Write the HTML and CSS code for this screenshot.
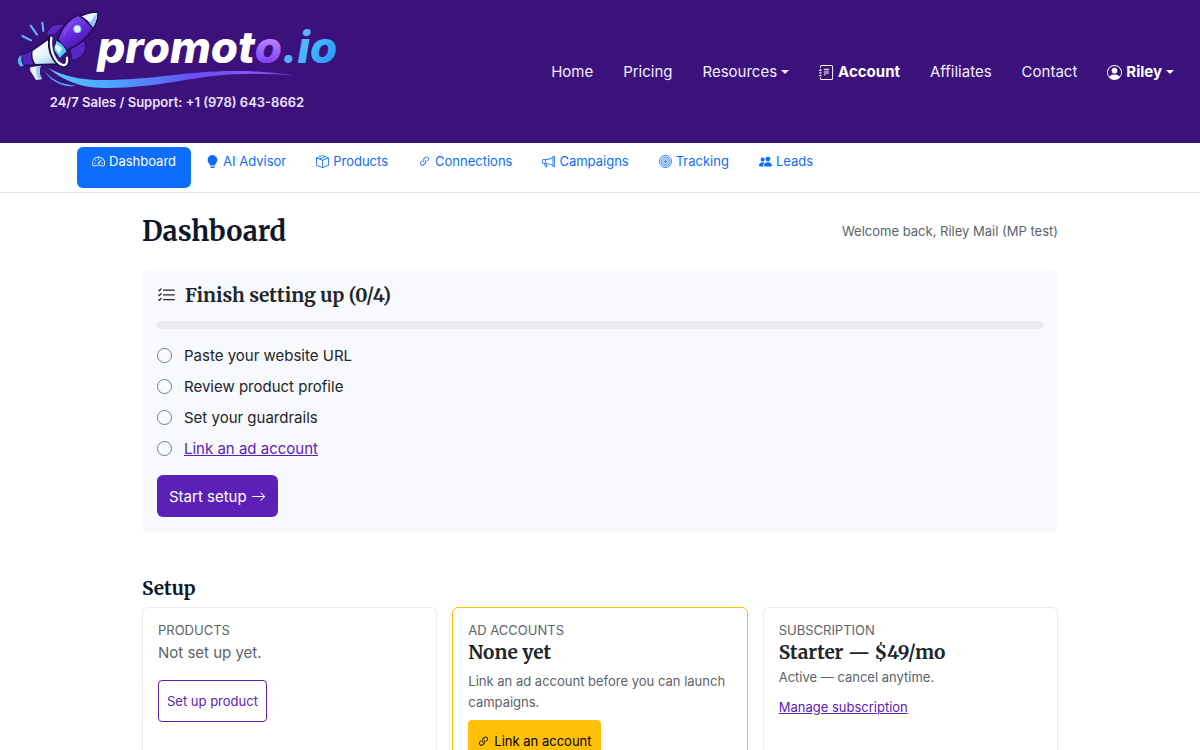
FILE: index.html
```html
<!DOCTYPE html>
<html lang="en">
<head>
    <meta charset="UTF-8">
    <meta name="viewport" content="width=device-width, initial-scale=1.0">
    <title>Dashboard - promoto.io</title>
    <link rel="stylesheet" href="styles.css">
</head>
<body>
    <!-- Shared icons -->
    <svg class="sprite" aria-hidden="true">
        <symbol id="journal" viewBox="0 0 16 16">
            <path d="M5 10.500a.5.5 0 0 1 .5-.5h2a.5.5 0 0 1 0 1h-2a.5.5 0 0 1-.5-.5m0-2a.5.5 0 0 1 .5-.5h5a.5.5 0 0 1 0 1h-5a.5.5 0 0 1-.5-.5m0-2a.5.5 0 0 1 .5-.5h5a.5.5 0 0 1 0 1h-5a.5.5 0 0 1-.5-.5m0-2a.5.5 0 0 1 .5-.5h5a.5.5 0 0 1 0 1h-5a.5.5 0 0 1-.5-.5"/>
            <path d="M3 0h10a2 2 0 0 1 2 2v12a2 2 0 0 1-2 2H3a2 2 0 0 1-2-2v-1h1v1a1 1 0 0 0 1 1h10a1 1 0 0 0 1-1V2a1 1 0 0 0-1-1H3a1 1 0 0 0-1 1v1H1V2a2 2 0 0 1 2-2"/>
            <path d="M1 5v-.5a.5.5 0 0 1 1 0V5h.5a.5.5 0 0 1 0 1h-2a.5.5 0 0 1 0-1zm0 3v-.5a.5.5 0 0 1 1 0V8h.5a.5.5 0 0 1 0 1h-2a.5.5 0 0 1 0-1zm0 3v-.5a.5.5 0 0 1 1 0v.5h.5a.5.5 0 0 1 0 1h-2a.5.5 0 0 1 0-1z"/>
        </symbol>
        <symbol id="person" viewBox="0 0 16 16">
            <path d="M11 6a3 3 0 1 1-6 0 3 3 0 0 1 6 0"/>
            <path fill-rule="evenodd" d="M0 8a8 8 0 1 1 16 0A8 8 0 0 1 0 8m8-7a7 7 0 0 0-5.468 11.37C3.242 11.226 4.805 10 8 10s4.757 1.225 5.468 2.37A7 7 0 0 0 8 1"/>
        </symbol>
        <symbol id="speedometer" viewBox="0 0 16 16">
            <path d="M8 4a.5.5 0 0 1 .5.5V6a.5.5 0 0 1-1 0V4.500A.5.5 0 0 1 8 4M3.732 5.732a.5.5 0 0 1 .707 0l.915.914a.5.5 0 1 1-.708.708l-.914-.915a.5.5 0 0 1 0-.707M2 10a.5.5 0 0 1 .5-.5h1.586a.5.5 0 0 1 0 1H2.500A.5.5 0 0 1 2 10m9.500 0a.5.5 0 0 1 .5-.5h1.500a.5.5 0 0 1 0 1H12a.5.5 0 0 1-.5-.5m.754-4.246a.39.39 0 0 0-.527-.02L7.547 9.310a.91.91 0 1 0 1.302 1.258l3.434-4.297a.39.39 0 0 0-.029-.518z"/>
            <path fill-rule="evenodd" d="M0 10a8 8 0 1 1 15.547 2.661c-.442 1.253-1.845 1.602-2.932 1.250C11.309 13.488 9.475 13 8 13c-1.474 0-3.310.488-4.615.911-1.087.352-2.490.003-2.932-1.250A8 8 0 0 1 0 10m8-7a7 7 0 0 0-6.603 9.329c.203.575.923.876 1.680.63C4.397 12.533 6.358 12 8 12s3.604.532 4.923.96c.757.245 1.477-.056 1.680-.631A7 7 0 0 0 8 3"/>
        </symbol>
        <symbol id="bulb" viewBox="0 0 16 16">
            <path d="M2 6a6 6 0 1 1 10.174 4.310c-.203.196-.359.4-.453.619l-.762 1.769A.5.5 0 0 1 10.500 13h-5a.5.5 0 0 1-.46-.302l-.761-1.770a2 2 0 0 0-.453-.618A5.980 5.980 0 0 1 2 6m3 8.500a.5.5 0 0 1 .5-.5h5a.5.5 0 0 1 0 1l-.224.447a1 1 0 0 1-.894.553H6.618a1 1 0 0 1-.894-.553L5.500 15a.5.5 0 0 1-.5-.5"/>
        </symbol>
        <symbol id="box" viewBox="0 0 16 16">
            <path fill-rule="evenodd" d="M8.186 1.113a.5.5 0 0 0-.372 0L1.846 3.500l2.404.961L10.404 2zm3.564 1.426L5.596 5 8 5.961 14.154 3.500zm3.250 1.700-6.500 2.600v7.922l6.500-2.600V4.240zM7.500 14.762V6.838L1 4.239v7.923zM7.443.184a1.500 1.500 0 0 1 1.114 0l7.129 2.852A.5.5 0 0 1 16 3.500v8.662a1 1 0 0 1-.629.928l-7.185 2.874a.5.5 0 0 1-.372 0L.63 13.090a1 1 0 0 1-.63-.928V3.500a.5.5 0 0 1 .314-.464z"/>
        </symbol>
        <symbol id="link" viewBox="0 0 16 16">
            <path d="M4.715 6.542 3.343 7.914a3 3 0 1 0 4.243 4.243l1.828-1.829A3 3 0 0 0 8.586 5.500L8 6.086a1 1 0 0 0-.154.199 2 2 0 0 1 .861 3.337L6.880 11.450a2 2 0 1 1-2.830-2.830l.793-.792a4 4 0 0 1-.128-1.287z"/>
            <path d="M6.586 4.672A3 3 0 0 0 7.414 9.500l.775-.776a2 2 0 0 1-.896-3.346L9.120 3.550a2 2 0 1 1 2.830 2.830l-.793.792c.112.42.155.855.128 1.287l1.372-1.372a3 3 0 1 0-4.243-4.243z"/>
        </symbol>
        <symbol id="megaphone" viewBox="0 0 16 16">
            <path fill-rule="evenodd" d="M13 2.500a1.500 1.500 0 0 1 3 0v11a1.500 1.500 0 0 1-3 0v-.214c-2.162-1.241-4.490-1.843-6.912-2.083l.405 2.712A1 1 0 0 1 5.510 15.100h-.548a1 1 0 0 1-.916-.599l-1.850-3.490-.202-.003A2.014 2.014 0 0 1 0 9V7a2.020 2.020 0 0 1 1.992-2.013 75 75 0 0 0 2.483-.075c3.043-.154 6.148-.849 8.525-2.199zm1 0v11a.5.5 0 0 0 1 0v-11a.5.5 0 0 0-1 0m-1 1.350c-2.344 1.205-5.209 1.842-8 2.033v4.233q.27.015.537.036c2.568.189 5.093.744 7.463 1.993zm-9 6.215v-4.130a95 95 0 0 1-1.992.052A1.020 1.020 0 0 0 1 7v2c0 .55.448 1.002 1.006 1.009A61 61 0 0 1 4 10.065m-.657.975 1.609 3.037.01.024h.548l-.002-.014-.443-2.966a68 68 0 0 0-1.722-.082z"/>
        </symbol>
        <symbol id="bullseye" viewBox="0 0 16 16">
            <g fill="none" stroke="currentColor">
                <circle cx="8" cy="8" r="7.5"/>
                <circle cx="8" cy="8" r="5.5"/>
                <circle cx="8" cy="8" r="3.5"/>
            </g>
            <circle cx="8" cy="8" r="1.5"/>
        </symbol>
        <symbol id="people" viewBox="0 0 16 16">
            <path d="M7 14s-1 0-1-1 1-4 5-4 5 3 5 4-1 1-1 1zm4-6a3 3 0 1 0 0-6 3 3 0 0 0 0 6m-5.784 6A2.240 2.240 0 0 1 5 13c0-1.355.68-2.750 1.936-3.720A6.300 6.300 0 0 0 5 9c-4 0-5 3-5 4s1 1 1 1zM4.500 8a2.500 2.500 0 1 0 0-5 2.500 2.500 0 0 0 0 5"/>
        </symbol>
        <symbol id="checklist" viewBox="0 0 16 16">
            <g fill="none" stroke="currentColor" stroke-linecap="round" stroke-linejoin="round">
                <path d="M5.500 3.500h9M5.500 7.500h9M5.500 11.500h9"/>
                <path d="m1.500 3.500.5.5 1.500-1.500M1.500 7.500 2 8l1.500-1.500M1.500 11.500l.5.5 1.500-1.500"/>
            </g>
        </symbol>
        <symbol id="circle" viewBox="0 0 16 16">
            <circle cx="8" cy="8" r="7.5" fill="none" stroke="currentColor"/>
        </symbol>
        <symbol id="arrow" viewBox="0 0 16 16">
            <path d="M1 8a.5.5 0 0 1 .5-.5h11.793l-3.147-3.146a.5.5 0 0 1 .708-.708l4 4a.5.5 0 0 1 0 .708l-4 4a.5.5 0 0 1-.708-.708L13.293 8.500H1.500A.5.5 0 0 1 1 8"/>
        </symbol>
    </svg>

    <header class="site-header">
        <div class="brand">
            <a href="#" class="brand-logo" aria-label="promoto.io home">
                <svg class="logo" viewBox="48 30 966 240">
                    <defs>
                        <linearGradient id="violet" x1="0" y1="105" x2="0" y2="195" gradientUnits="userSpaceOnUse">
                            <stop offset="0" stop-color="#c38cff"/>
                            <stop offset="1" stop-color="#7c3df5"/>
                        </linearGradient>
                        <linearGradient id="sky" x1="870" y1="85" x2="990" y2="195" gradientUnits="userSpaceOnUse">
                            <stop offset="0" stop-color="#6fb4ff"/>
                            <stop offset=".55" stop-color="#45b5ff"/>
                            <stop offset="1" stop-color="#2898fb"/>
                        </linearGradient>
                        <linearGradient id="swoosh" x1="130" y1="0" x2="890" y2="0" gradientUnits="userSpaceOnUse">
                            <stop offset="0" stop-color="#5bc8ff"/>
                            <stop offset=".3" stop-color="#4aa0ff"/>
                            <stop offset=".6" stop-color="#6a4cf5"/>
                            <stop offset=".85" stop-color="#8b55ff"/>
                            <stop offset="1" stop-color="#6a35d8"/>
                        </linearGradient>
                        <linearGradient id="hull" x1="200" y1="70" x2="245" y2="140" gradientUnits="userSpaceOnUse">
                            <stop offset="0" stop-color="#8045f2"/>
                            <stop offset=".5" stop-color="#6127d6"/>
                            <stop offset="1" stop-color="#4317a5"/>
                        </linearGradient>
                        <linearGradient id="shell" x1="110" y1="120" x2="150" y2="200" gradientUnits="userSpaceOnUse">
                            <stop offset="0" stop-color="#ffffff"/>
                            <stop offset=".6" stop-color="#e4f2ff"/>
                            <stop offset="1" stop-color="#94c7f0"/>
                        </linearGradient>
                    </defs>
                    <!-- swoosh -->
                    <path fill="url(#swoosh)" d="M144 203C190 228 240 240 310 240c150 0 250-27 390-27 80 0 130 5 187 14-60-5-120-8-187-4-130 7-230 43-390 41-70-1-125-25-166-61z"/>
                    <path fill="#4aaaf5" d="M130 207c20 31 54 47 98 50-34 7-78-10-98-50z"/>
                    <!-- sparks -->
                    <g stroke="#62b5ff" stroke-width="6" stroke-linecap="round">
                        <path d="M67 108l26 13M92 77l19 27M127 68l3 25"/>
                    </g>
                    <!-- rocket fins and hull -->
                    <path fill="#5b25c7" stroke="#24104f" stroke-width="3" d="M195 73c-32-5-52 7-56 33l25-2zM252 121c13 26-1 51-35 62l-7-35z"/>
                    <path fill="url(#hull)" stroke="#1c0b4c" stroke-width="4" d="M174 119c10-36 32-62 66-76l39 42c-18 32-46 52-78 66z"/>
                    <path fill="#e8f6ff" stroke="#1c0b4c" stroke-width="4" d="M240 49c18-9 35-13 54-13 1 19-5 35-15 50-10-18-22-29-39-37z"/>
                    <path fill="#91c8f3" d="M291 39c0 18-4 31-12 42l-11-12z"/>
                    <circle cx="232" cy="87" r="11" fill="#dff2ff" stroke="#92bdf0" stroke-width="3"/>
                    <path fill="none" stroke="#a46cff" stroke-width="2" d="M190 107c9-19 20-32 32-42"/>
                    <path fill="#58c6ff" stroke="#1c0b4c" stroke-width="3" d="M168 120c15 7 26 18 33 34l-22 22-18-26z"/>
                    <path fill="#dff8ff" d="M169 132l17 13-8 17-15-20z"/>
                    <!-- megaphone -->
                    <path fill="#58b9ee" d="M66 166c-15 3-17 26-3 34l13-7-4-24z"/>
                    <path fill="#5524bd" stroke="#1c0b4c" stroke-width="3" d="M68 164l29-13c-3 18 0 33 7 43l-31 2c-8-8-10-20-5-32z"/>
                    <path fill="url(#shell)" stroke="#1c0b4c" stroke-width="4" d="M96 152l55-39c-1 31 6 57 27 79l-73 2c-8-11-12-25-9-42z"/>
                    <path fill="#e7f4ff" d="M91 202l31-5c-5 15-4 28 4 40l-18 3-18-29z"/>
                    <path fill="#9cc9ef" d="M110 199l12-2c-5 15-4 28 4 40l-9 2c-8-11-10-24-7-40z"/>
                    <path fill="none" stroke="#1c0b4c" stroke-width="13" stroke-linecap="round" d="M151 113c-5 37 10 74 36 83 13 4 18-8 16-23"/>
                    <path fill="none" stroke="#f6fbff" stroke-width="7" stroke-linecap="round" d="M154 113c-5 37 10 74 34 82 11 3 15-8 13-22"/>
                    <text class="wordmark" x="292" y="190">promot<tspan fill="url(#violet)">o</tspan><tspan fill="url(#sky)">.io</tspan></text>
                </svg>
            </a>
            <div class="phone">24/7 Sales / Support: +1 (978) 643-8662</div>
        </div>
        <nav class="main-nav" aria-label="Main">
            <a href="#">Home</a>
            <a href="#">Pricing</a>
            <a href="#" class="dropdown">Resources</a>
            <a href="#" class="strong"><svg class="icon"><use href="#journal"/></svg>Account</a>
            <a href="#">Affiliates</a>
            <a href="#">Contact</a>
            <a href="#" class="strong dropdown"><svg class="icon"><use href="#person"/></svg>Riley</a>
        </nav>
    </header>

    <div class="sub-header">
        <nav class="sub-nav" aria-label="Account">
            <a href="#" class="active"><svg class="icon"><use href="#speedometer"/></svg>Dashboard</a>
            <a href="#"><svg class="icon"><use href="#bulb"/></svg>AI Advisor</a>
            <a href="#"><svg class="icon"><use href="#box"/></svg>Products</a>
            <a href="#"><svg class="icon"><use href="#link"/></svg>Connections</a>
            <a href="#"><svg class="icon"><use href="#megaphone"/></svg>Campaigns</a>
            <a href="#"><svg class="icon"><use href="#bullseye"/></svg>Tracking</a>
            <a href="#"><svg class="icon"><use href="#people"/></svg>Leads</a>
        </nav>
    </div>

    <main class="container">
        <div class="page-head">
            <h1>Dashboard</h1>
            <span class="welcome">Welcome back, Riley Mail (MP test)</span>
        </div>

        <section class="checklist">
            <h2><svg class="icon"><use href="#checklist"/></svg>Finish setting up (0/4)</h2>
            <div class="progress" role="progressbar" aria-label="Setup progress" aria-valuenow="0" aria-valuemin="0" aria-valuemax="4"></div>
            <ul>
                <li><svg class="icon"><use href="#circle"/></svg>Paste your website URL</li>
                <li><svg class="icon"><use href="#circle"/></svg>Review product profile</li>
                <li><svg class="icon"><use href="#circle"/></svg>Set your guardrails</li>
                <li><svg class="icon"><use href="#circle"/></svg><a href="#">Link an ad account</a></li>
            </ul>
            <button type="button" class="btn btn-primary">Start setup <svg class="icon"><use href="#arrow"/></svg></button>
        </section>

        <h2 class="section-title">Setup</h2>
        <div class="cards">
            <section class="card">
                <div class="label">Products</div>
                <p class="empty">Not set up yet.</p>
                <button type="button" class="btn btn-small btn-outline">Set up product</button>
            </section>
            <section class="card card-warning">
                <div class="label">Ad accounts</div>
                <h3>None yet</h3>
                <p class="note spaced">Link an ad account before you can launch campaigns.</p>
                <button type="button" class="btn btn-small btn-warning"><svg class="icon"><use href="#link"/></svg>Link an account</button>
            </section>
            <section class="card">
                <div class="label">Subscription</div>
                <h3>Starter — $49/mo</h3>
                <p class="note">Active — cancel anytime.</p>
                <a href="#" class="manage">Manage subscription</a>
            </section>
        </div>
    </main>
</body>
</html>
```
FILE: styles.css
```css
* {
    margin: 0;
    padding: 0;
    box-sizing: border-box;
}

body {
    background: #fff;
    color: #212529;
    font-family: Inter, "Liberation Sans", sans-serif;
    font-size: 15px;
    line-height: 24px;
}

h1, h2, h3 {
    font-family: Merriweather, "Liberation Serif", serif;
    font-weight: 700;
}

a {
    color: #5b21b6;
}

.sprite {
    display: none;
}

.icon {
    width: 1em;
    height: 1em;
    flex: none;
    fill: currentColor;
}

/* Header */
.site-header {
    display: flex;
    justify-content: space-between;
    align-items: center;
    padding: 10px 26px 31px 16px;
    background: #3b127c;
}

.brand {
    text-align: center;
}

.brand-logo {
    display: block;
}

.logo {
    display: block;
    width: 322px;
    height: 80px;
}

.wordmark {
    font-family: Inter, sans-serif;
    font-size: 132px;
    font-style: italic;
    font-weight: 800;
    fill: #fff;
}

.phone {
    margin-top: 2px;
    color: #ebe1fb;
    font-size: 13px;
    font-weight: 600;
    line-height: 20px;
}

.main-nav {
    display: flex;
    gap: 30px;
    padding-top: 22px;
}

.main-nav a {
    display: flex;
    align-items: center;
    gap: 4px;
    color: #f3edff;
    text-decoration: none;
}

.main-nav .strong {
    color: #fff;
    font-weight: 700;
}

.dropdown::after {
    content: "";
    border: 4px solid transparent;
    border-top-color: currentColor;
    border-bottom: 0;
}

/* Account tabs */
.sub-header {
    padding: 4px 0;
    border-bottom: 1px solid #dee2e6;
}

.sub-nav {
    display: flex;
    max-width: 1046px;
    margin: 0 auto;
}

.sub-nav a {
    display: flex;
    gap: 4px;
    padding: 4px 15px 17px;
    border-radius: 6px;
    color: #0d6efd;
    font-size: 13px;
    line-height: 20px;
    text-decoration: none;
}

.sub-nav .icon {
    margin-top: 4px;
}

.sub-nav .active {
    background: #0d6efd;
    color: #fff;
}

/* Page */
.container {
    max-width: 948px;
    margin: 0 auto;
    padding: 20px 16px;
}

.page-head {
    display: flex;
    justify-content: space-between;
    align-items: center;
    margin-bottom: 20px;
}

h1 {
    color: #0f172a;
    font-size: 27px;
    line-height: 36px;
}

.welcome {
    color: #5c636a;
    font-size: 13px;
}

.checklist {
    margin-bottom: 44px;
    padding: 14px 15px 15px;
    border-radius: 6px;
    background: #f8f9fc;
}

.checklist h2 {
    display: flex;
    align-items: center;
    gap: 9px;
    font-size: 19px;
    line-height: 24px;
}

.checklist h2 .icon {
    width: 19px;
    height: 19px;
}

.progress {
    height: 8px;
    margin: 14px 0 11px;
    border-radius: 4px;
    background: #e9ebef;
}

.checklist ul {
    list-style: none;
}

.checklist li {
    display: flex;
    align-items: center;
    gap: 12px;
    line-height: 31px;
}

.checklist li .icon {
    color: #6c757d;
}

.btn {
    display: inline-flex;
    align-items: center;
    gap: 4px;
    min-height: 42px;
    padding: 0 11px;
    border: 1px solid transparent;
    border-radius: 6px;
    font-family: inherit;
    font-size: 15px;
    cursor: pointer;
}

.btn-small {
    padding: 0 8px;
    border-radius: 4px;
    font-size: 13px;
}

.btn-primary {
    margin-top: 11px;
    background: #5b21b6;
    color: #fff;
}

.btn-outline {
    border-color: #5b21b6;
    background: #fff;
    color: #5b21b6;
}

.btn-warning {
    background: #ffc107;
    color: #000;
}

.section-title {
    margin-bottom: 7px;
    color: #0f172a;
    font-size: 19px;
    line-height: 24px;
}

.cards {
    display: grid;
    grid-template-columns: repeat(3, 1fr);
    gap: 15px;
}

.card {
    padding: 12px 15px 15px;
    border: 1px solid #e9ecef;
    border-radius: 6px;
}

.card-warning {
    border-color: #ffc107;
}

.label {
    color: #5c636a;
    font-size: 13px;
    line-height: 20px;
    text-transform: uppercase;
}

.empty {
    margin: 1px 0 15px;
    color: #5c636a;
}

.card h3 {
    font-size: 19px;
    line-height: 24px;
}

.note {
    margin: 3px 0 7px;
    color: #5c636a;
    font-size: 13px;
    line-height: 21px;
}

.note.spaced {
    margin-top: 7px;
}

.manage {
    font-size: 13px;
}

/* Smaller screens */
@media (max-width: 960px) {
    .site-header {
        flex-direction: column;
    }

    .main-nav,
    .sub-nav {
        flex-wrap: wrap;
    }

    .cards {
        grid-template-columns: 1fr;
    }
}
```
